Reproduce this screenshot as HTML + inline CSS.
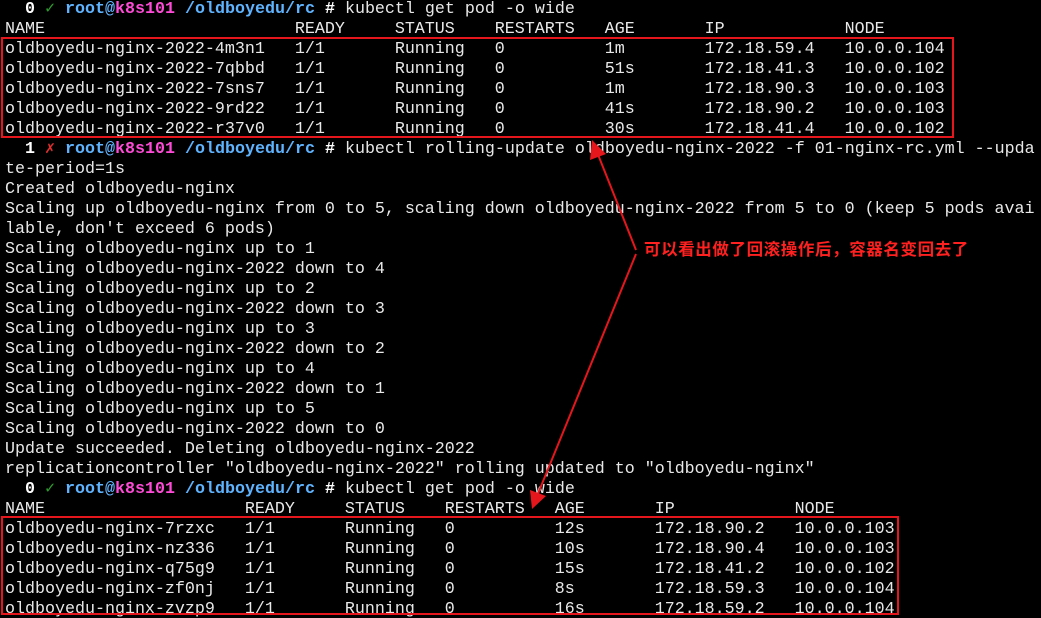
<!DOCTYPE html>
<html><head><meta charset="utf-8"><style>
html,body{margin:0;padding:0;background:#000;width:1041px;height:618px;overflow:hidden;position:relative}
pre{position:absolute;left:5px;top:0px;margin:0;font-family:"Liberation Mono","DejaVu Sans Mono",monospace;font-size:16.67px;line-height:20px;color:#e8e8e8;white-space:pre}
.b{font-weight:bold;color:#fff}.g{color:#2e9a2e}.r{color:#e03030}.c{color:#5fb4ff;font-weight:bold}.m{color:#ff4bd8;font-weight:bold}
.box{position:absolute;border:2px solid #e5161c;box-sizing:border-box}
.note{position:absolute;left:644px;top:236px;color:#ff2020;font-family:"Noto Sans CJK SC","WenQuanYi Zen Hei",sans-serif;font-weight:bold;font-size:16.5px;letter-spacing:0.6px}
svg{position:absolute;left:0;top:0}
</style></head><body>
<pre>  <span class="b">0</span> <span class="g">✓</span> <span class="c">root@</span><span class="m">k8s101</span> <span class="c">/oldboyedu/rc</span> <span class="b">#</span> kubectl get pod -o wide
NAME                         READY     STATUS    RESTARTS   AGE       IP            NODE
oldboyedu-nginx-2022-4m3n1   1/1       Running   0          1m        172.18.59.4   10.0.0.104
oldboyedu-nginx-2022-7qbbd   1/1       Running   0          51s       172.18.41.3   10.0.0.102
oldboyedu-nginx-2022-7sns7   1/1       Running   0          1m        172.18.90.3   10.0.0.103
oldboyedu-nginx-2022-9rd22   1/1       Running   0          41s       172.18.90.2   10.0.0.103
oldboyedu-nginx-2022-r37v0   1/1       Running   0          30s       172.18.41.4   10.0.0.102
  <span class="b">1</span> <span class="r">✗</span> <span class="c">root@</span><span class="m">k8s101</span> <span class="c">/oldboyedu/rc</span> <span class="b">#</span> kubectl rolling-update oldboyedu-nginx-2022 -f 01-nginx-rc.yml --upda
te-period=1s
Created oldboyedu-nginx
Scaling up oldboyedu-nginx from 0 to 5, scaling down oldboyedu-nginx-2022 from 5 to 0 (keep 5 pods avai
lable, don't exceed 6 pods)
Scaling oldboyedu-nginx up to 1
Scaling oldboyedu-nginx-2022 down to 4
Scaling oldboyedu-nginx up to 2
Scaling oldboyedu-nginx-2022 down to 3
Scaling oldboyedu-nginx up to 3
Scaling oldboyedu-nginx-2022 down to 2
Scaling oldboyedu-nginx up to 4
Scaling oldboyedu-nginx-2022 down to 1
Scaling oldboyedu-nginx up to 5
Scaling oldboyedu-nginx-2022 down to 0
Update succeeded. Deleting oldboyedu-nginx-2022
replicationcontroller "oldboyedu-nginx-2022" rolling updated to "oldboyedu-nginx"
  <span class="b">0</span> <span class="g">✓</span> <span class="c">root@</span><span class="m">k8s101</span> <span class="c">/oldboyedu/rc</span> <span class="b">#</span> kubectl get pod -o wide
NAME                    READY     STATUS    RESTARTS   AGE       IP            NODE
oldboyedu-nginx-7rzxc   1/1       Running   0          12s       172.18.90.2   10.0.0.103
oldboyedu-nginx-nz336   1/1       Running   0          10s       172.18.90.4   10.0.0.103
oldboyedu-nginx-q75g9   1/1       Running   0          15s       172.18.41.2   10.0.0.102
oldboyedu-nginx-zf0nj   1/1       Running   0          8s        172.18.59.3   10.0.0.104
oldboyedu-nginx-zvzp9   1/1       Running   0          16s       172.18.59.2   10.0.0.104</pre>
<div class="box" style="left:1px;top:37px;width:953px;height:101px"></div>
<div class="box" style="left:1px;top:516px;width:898px;height:99px"></div>
<div class="note">可以看出做了回滚操作后，容器名变回去了</div>
<svg width="1041" height="618">
<line x1="636" y1="250" x2="597" y2="152" stroke="#e5161c" stroke-width="2"/>
<polygon points="592,140 590,160 606,154" fill="#e5161c"/>
<line x1="636" y1="254" x2="537" y2="496" stroke="#e5161c" stroke-width="2"/>
<polygon points="532,509 530,490 546,496" fill="#e5161c"/>
</svg>
</body></html>
